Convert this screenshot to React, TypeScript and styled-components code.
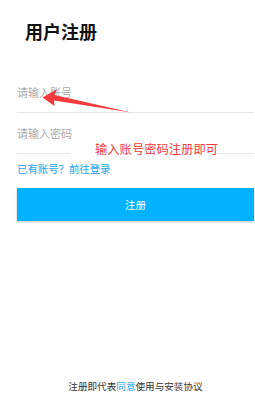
import React from 'react';
import styled, { createGlobalStyle } from 'styled-components';

const GlobalStyle = createGlobalStyle`
    html, body {
        margin: 0;
        padding: 0;
        background: #ffffff;
    }
    body {
        font-family: "Noto Sans CJK SC", "Noto Sans", sans-serif;
    }
`;

const App = () => (
    <Page>
        <GlobalStyle />
        <Title>用户注册</Title>
        <Form>
            <Field>
                <Input placeholder="请输入账号" />
            </Field>
            <Field>
                <Input type="password" placeholder="请输入密码" />
            </Field>
            <LoginLink>已有账号？前往登录</LoginLink>
            <SubmitButton>注册</SubmitButton>
        </Form>
        <Footer>
            注册即代表<Highlight>同意</Highlight>使用与安装协议
        </Footer>

        <Arrow width="255" height="400" viewBox="0 0 255 400">
            <polygon
                points="42.5,97.5 57,89 54.5,95 131,112.5 54,100.5 54.5,106"
                fill="#f53b3b"
            />
        </Arrow>
        <Note>输入账号密码注册即可</Note>
    </Page>
);

const Page = styled.div`
    position: relative;
    display: flex;
    flex-direction: column;
    min-height: 100vh;
    box-sizing: border-box;
    padding: 0 1px 0 17px;
`;

const Title = styled.div`
    margin: 20px 0 0 8px;
    font-size: 18px;
    line-height: 22px;
    font-weight: 700;
    color: #111;
`;

const Form = styled.div`
    display: flex;
    flex-direction: column;
    margin-top: 30px;
`;

const Field = styled.div`
    display: flex;
    align-items: center;
    height: 40px;
    border-bottom: 1px solid #e6e6e6;
`;

const Input = styled.input`
    flex: 1;
    border: none;
    outline: none;
    padding: 0;
    background: transparent;
    font-family: inherit;
    font-size: 11px;
    color: #333;

    &::placeholder {
        color: #aaaaaa;
    }
`;

const LoginLink = styled.div`
    margin-top: 8px;
    font-size: 10.4px;
    line-height: 14px;
    color: #1aa3ea;
`;

const SubmitButton = styled.button`
    margin-top: 12px;
    height: 33px;
    border: none;
    border-radius: 0;
    background: #00b2ff;
    color: #ffffff;
    font-family: inherit;
    font-size: 10.5px;
    box-shadow: 0 1px 2px rgba(0, 0, 0, 0.25);
`;

const Footer = styled.div`
    margin-top: auto;
    padding-bottom: 7px;
    text-align: center;
    font-size: 9.6px;
    line-height: 14px;
    color: #333;
`;

const Highlight = styled.span`
    color: #1aa3ea;
`;

const Arrow = styled.svg`
    position: absolute;
    top: 0;
    left: 0;
    pointer-events: none;
`;

const Note = styled.div`
    position: absolute;
    top: 141px;
    left: 70px;
    padding-left: 25px;
    background: #ffffff;
    font-size: 12.3px;
    line-height: 17px;
    color: #f53b3b;
`;

export default App;
